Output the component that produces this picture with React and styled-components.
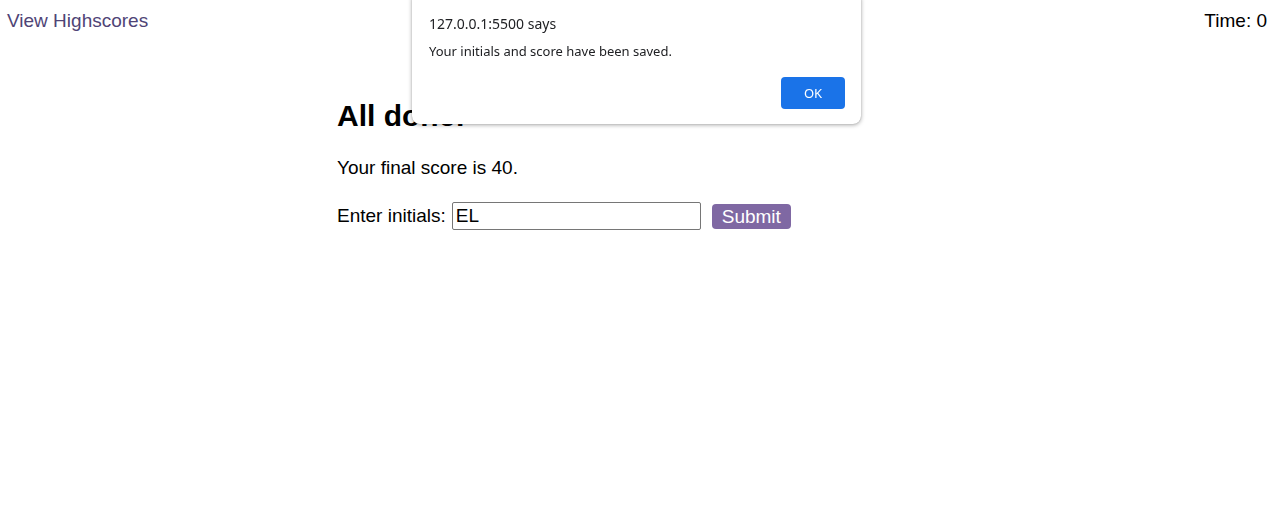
import React from "react";
import styled, { createGlobalStyle } from "styled-components";

const Global = createGlobalStyle`
  html, body { margin: 0; padding: 0; background: #fff; }
  body { font-family: "Liberation Sans", Arial, sans-serif; color: #000; }
`;

const Header = styled.header`
  display: flex;
  justify-content: space-between;
  align-items: center;
  padding: 10px 10px 0 7px;
  font-size: 19px;
  line-height: 22px;
`;

const HighscoreLink = styled.a`
  color: #4f4476;
  text-decoration: none;
  cursor: pointer;
`;

const Timer = styled.div`
  color: #000;
`;

const Main = styled.main`
  width: 603px;
  margin: 0 auto;
  padding-top: 67px;
`;

const Title = styled.h2`
  font-size: 30px;
  font-weight: bold;
  line-height: 34px;
  margin: 0 0 24px 0;
`;

const Score = styled.p`
  font-size: 19px;
  line-height: 22px;
  margin: 0 0 23px 0;
`;

const Form = styled.form`
  display: flex;
  align-items: center;
  font-size: 19px;
`;

const Label = styled.label`
  margin-right: 6px;
`;

const Input = styled.input`
  box-sizing: border-box;
  width: 249px;
  height: 28px;
  border: 1px solid #767676;
  border-radius: 2px;
  padding: 1px 3px;
  font-family: "Liberation Sans", Arial, sans-serif;
  font-size: 19px;
  color: #000;
  outline: none;
`;

const SubmitButton = styled.button`
  margin-left: 11px;
  width: 79px;
  height: 25px;
  border: none;
  border-radius: 4px;
  background: #7f68a3;
  color: #fff;
  font-family: "Liberation Sans", Arial, sans-serif;
  font-size: 19px;
  padding: 0;
  line-height: 25px;
`;

const Dialog = styled.div`
  position: fixed;
  top: -8px;
  left: 412px;
  width: 449px;
  box-sizing: border-box;
  padding: 22px 16px 15px 17px;
  background: #fff;
  border-radius: 8px;
  box-shadow: 0 1px 4px rgba(0, 0, 0, 0.35), 0 0 1px rgba(0, 0, 0, 0.3);
  font-family: "Noto Sans", "Open Sans", sans-serif;
  color: #202124;
  display: flex;
  flex-direction: column;
`;

const DialogTitle = styled.div`
  font-size: 14px;
  line-height: 20px;
  margin-bottom: 8px;
`;

const DialogMessage = styled.div`
  font-size: 13px;
  line-height: 18px;
  margin-bottom: 17px;
`;

const DialogActions = styled.div`
  display: flex;
  justify-content: flex-end;
`;

const OkButton = styled.button`
  width: 64px;
  height: 32px;
  border: none;
  border-radius: 4px;
  background: #1a73e8;
  color: #fff;
  font-family: "Noto Sans", "Open Sans", sans-serif;
  font-size: 13px;
  padding: 0;
`;

export default function App() {
  return (
    <>
      <Global />
      <Header>
        <HighscoreLink>View Highscores</HighscoreLink>
        <Timer>Time: 0</Timer>
      </Header>
      <Main>
        <Title>All done!</Title>
        <Score>Your final score is 40.</Score>
        <Form onSubmit={(e) => e.preventDefault()}>
          <Label>Enter initials:</Label>
          <Input defaultValue="EL" />
          <SubmitButton type="submit">Submit</SubmitButton>
        </Form>
      </Main>
      <Dialog role="alertdialog">
        <DialogTitle>127.0.0.1:5500 says</DialogTitle>
        <DialogMessage>Your initials and score have been saved.</DialogMessage>
        <DialogActions>
          <OkButton>OK</OkButton>
        </DialogActions>
      </Dialog>
    </>
  );
}
